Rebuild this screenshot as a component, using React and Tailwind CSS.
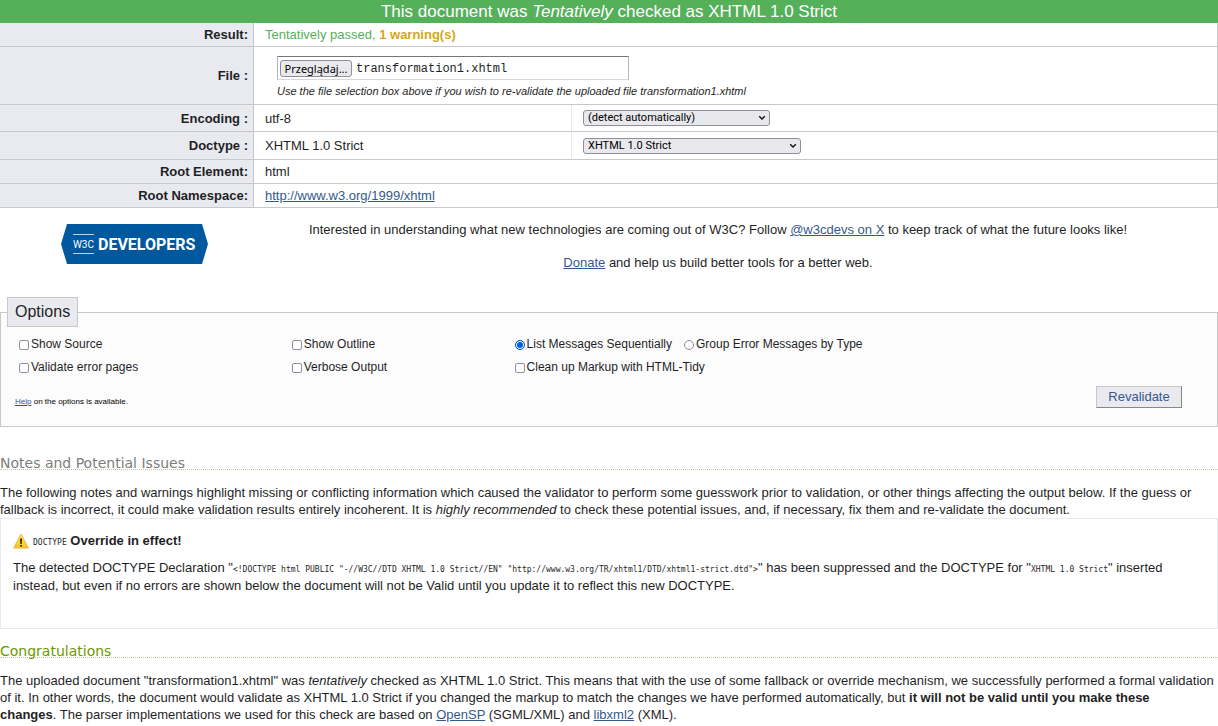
import { useRef, useState } from 'react';

const link = 'text-[#36598d] underline';
const th =
  'border-r border-b border-[#c8c8ca] bg-[#e8eaef] pr-[5px] text-right align-middle font-bold';
const td = 'border-b border-[#c8c8ca] pl-[11px] text-left align-middle';
const box =
  'm-0 size-[10px] shrink-0 appearance-none border border-[#8f8f9d] bg-white checked:border-[#0060df] checked:bg-[#0060df]';

function Check({ id, label }) {
  return (
    <span className="flex items-center gap-[2px]">
      <input id={id} type="checkbox" className={`${box} rounded-xs`} />
      <label htmlFor={id}>{label}</label>
    </span>
  );
}

function Radio({ id, label, defaultChecked }) {
  return (
    <span className="flex items-center gap-[2px]">
      <input
        id={id}
        type="radio"
        name="group"
        defaultChecked={defaultChecked}
        className={`${box} rounded-full checked:shadow-[inset_0_0_0_1px_white]`}
      />
      <label htmlFor={id}>{label}</label>
    </span>
  );
}

function Select({ id, children, className }) {
  return (
    <span className={`relative flex ${className}`}>
      <select
        id={id}
        className="h-4 w-full appearance-none rounded-[3px] border border-[#8f8f9d] bg-[#e9e9ed] pr-5 pl-1 font-[Roboto,sans-serif] text-[11px] leading-[14px] text-black"
      >
        {children}
      </select>
      <svg viewBox="0 0 8 6" className="pointer-events-none absolute top-[5px] right-1 h-[6px] w-2">
        <path d="M1.2 1.2 L4 4 L6.8 1.2" fill="none" stroke="#111" strokeWidth="1.4" />
      </svg>
    </span>
  );
}

function FileField() {
  const input = useRef(null);
  const [name, setName] = useState('transformation1.xhtml');
  return (
    <div className="flex h-6 w-[352px] items-center gap-1 border border-t-[#767676] border-r-[#b5b5b5] border-b-[#d8d8d8] border-l-[#b5b5b5] bg-white px-[2px]">
      <input
        ref={input}
        id="file"
        type="file"
        tabIndex={-1}
        className="hidden"
        onChange={(e) => e.target.files[0] && setName(e.target.files[0].name)}
      />
      <button
        type="button"
        onClick={() => input.current.click()}
        className="h-[17px] w-[72px] shrink-0 rounded-[3px] border border-[#8f8f9d] bg-[#e9e9ed] text-center font-['Noto_Sans',sans-serif] text-[11px] leading-[15px] text-black"
      >
        Przeglądaj...
      </button>
      <span className="pt-px font-['Liberation_Mono',monospace] text-[12px] leading-4 text-[#1f1f26]">{name}</span>
    </div>
  );
}

function DevelopersLogo() {
  return (
    <a href="https://www.w3.org/developers/" aria-label="W3C Developers" className="block">
      <svg viewBox="0 0 147 40" className="block h-10 w-[147px]">
        <path d="M6 0 H141 L147 20 L141 40 H6 L0 20 Z" fill="#00599f" />
        <path d="M12 10.5 H33 M12 29.5 H33" stroke="#b9d3e8" strokeWidth="1" />
        <text x="12" y="24" fill="#fff" fontSize="10" fontFamily="Roboto, sans-serif">
          W3C
        </text>
        <text x="37" y="26" fill="#fff" fontSize="16" fontWeight="bold" fontFamily="Roboto, sans-serif">
          DEVELOPERS
        </text>
      </svg>
    </a>
  );
}

function WarningIcon() {
  return (
    <svg viewBox="0 0 16 16" className="size-4 shrink-0" aria-hidden="true">
      <defs>
        <linearGradient id="warn" x1="0" y1="0" x2="0" y2="1">
          <stop offset="0" stopColor="#ffe86a" />
          <stop offset="1" stopColor="#f8c512" />
        </linearGradient>
      </defs>
      <path
        d="M8 1 L15.3 15 H0.7 Z"
        fill="url(#warn)"
        stroke="#eebc3a"
        strokeWidth="1"
        strokeLinejoin="round"
      />
      <path d="M7 5.5 H9 L8.7 11 H7.3 Z" fill="#2a2a10" />
      <rect x="7.1" y="12" width="1.8" height="1.6" fill="#2a2a10" />
    </svg>
  );
}

function Heading({ className, children }) {
  return (
    <h3
      className={`h-[15px] border-b border-dotted border-[#c3c3a2] font-['DejaVu_Sans',sans-serif] text-[14px] leading-4 ${className}`}
    >
      {children}
    </h3>
  );
}

function Code({ children, className = '' }) {
  return <code className={`font-['DejaVu_Sans_Mono',monospace] text-[8px] leading-none ${className}`}>{children}</code>;
}

export default function App() {
  return (
    <div className="bg-white font-['Liberation_Sans',Arial,sans-serif] text-[13px] leading-[17px] text-[#1f1f26]">
      <form onSubmit={(e) => e.preventDefault()}>
        <h2 className="h-[23px] bg-[#55b05a] text-center text-[17px] leading-[23px] text-white">
          This document was <em>Tentatively</em> checked as XHTML 1.0 Strict
        </h2>
        <table className="w-full table-fixed border-separate border-spacing-0 border-r border-[#c8c8ca]">
          <colgroup>
            <col className="w-[254px]" />
            <col className="w-[317px]" />
            <col />
          </colgroup>
          <tbody>
            <tr className="h-6">
              <th scope="row" className={th}>Result:</th>
              <td colSpan={2} className={`${td} text-[#55b05a]`}>
                Tentatively passed, <strong className="text-[#d6a81b]">1 warning(s)</strong>
              </td>
            </tr>
            <tr className="h-[58px]">
              <th scope="row" className={th}>
                <label htmlFor="file">File :</label>
              </th>
              <td colSpan={2} className={`${td} align-top`}>
                <div className="flex flex-col gap-[3px] pt-[9px] pl-3">
                  <FileField />
                  <em className="text-[11px] leading-4">
                    Use the file selection box above if you wish to re-validate the uploaded file transformation1.xhtml
                  </em>
                </div>
              </td>
            </tr>
            <tr className="h-[27px]">
              <th scope="row" className={th}>
                <label htmlFor="charset">Encoding :</label>
              </th>
              <td className={td}>utf-8</td>
              <td className={`${td} border-l border-l-[#e8eaef]`}>
                <Select id="charset" className="w-[187px]">
                  <option>(detect automatically)</option>
                  <option>utf-8 (Unicode, worldwide)</option>
                </Select>
              </td>
            </tr>
            <tr className="h-7">
              <th scope="row" className={th}>
                <label htmlFor="doctype">Doctype :</label>
              </th>
              <td className={td}>XHTML 1.0 Strict</td>
              <td className={`${td} border-l border-l-[#e8eaef]`}>
                <Select id="doctype" className="w-[218px]">
                  <option>XHTML 1.0 Strict</option>
                  <option>XHTML 1.0 Transitional</option>
                </Select>
              </td>
            </tr>
            <tr className="h-6">
              <th scope="row" className={th}>Root Element:</th>
              <td colSpan={2} className={td}>html</td>
            </tr>
            <tr className="h-6">
              <th scope="row" className={th}>Root Namespace:</th>
              <td colSpan={2} className={td}>
                <a href="http://www.w3.org/1999/xhtml" className={link}>http://www.w3.org/1999/xhtml</a>
              </td>
            </tr>
          </tbody>
        </table>

        <div className="flex items-start pl-[61px]">
          <div className="pt-4">
            <DevelopersLogo />
          </div>
          <div className="flex flex-1 flex-col gap-4 pt-[13px] pl-[10px] text-center">
            <p>
              Interested in understanding what new technologies are coming out of W3C? Follow{' '}
              <a href="https://x.com/w3cdevs" className={link}>@w3cdevs on X</a> to keep track of what the future looks
              like!
            </p>
            <p>
              <a href="https://www.w3.org/donate/" className={link}>Donate</a> and help us build better tools for a
              better web.
            </p>
          </div>
        </div>

        <fieldset className="mt-[26px] border border-[#c8c8ca] bg-[#fcfcfc] pr-[35px] pb-4 pl-[14px] text-[12px]">
          <legend className="-ml-2 h-[30px] border border-[#c8c8ca] bg-[#e8eaef] px-[7px] text-[16px] leading-7">
            Options
          </legend>
          <div className="grid grid-cols-[273fr_223fr_668fr] gap-y-[6px] pt-[9px] pl-1">
            <Check id="ss" label="Show Source" />
            <Check id="outline" label="Show Outline" />
            <div className="flex gap-3">
              <Radio id="group-no" label="List Messages Sequentially" defaultChecked />
              <Radio id="group-yes" label="Group Error Messages by Type" />
            </div>
            <Check id="No200" label="Validate error pages" />
            <Check id="verbose" label="Verbose Output" />
            <Check id="st" label="Clean up Markup with HTML-Tidy" />
          </div>
          <div className="flex items-start justify-between pt-[10px]">
            <p className="pt-2 text-[8px] leading-4 text-black">
              <a href="#help" className="text-[#1d5fa5] underline">Help</a> on the options is available.
            </p>
            <button
              type="submit"
              className="h-[22px] w-[86px] border border-t-[#c8c8ca] border-r-[#888] border-b-[#888] border-l-[#c8c8ca] bg-[#e8eaef] text-[13px] leading-5 text-[#36598d]"
            >
              Revalidate
            </button>
          </div>
        </fieldset>
      </form>

      <section className="pt-7">
        <Heading className="text-[#7d7d7d]">Notes and Potential Issues</Heading>
        <p className="pt-[14px]">
          The following notes and warnings highlight missing or conflicting information which caused the validator to
          perform some guesswork prior to validation, or other things affecting the output below. If the guess or
          fallback is incorrect, it could make validation results entirely incoherent. It is <em>highly recommended</em>{' '}
          to check these potential issues, and, if necessary, fix them and re-validate the document.
        </p>
        <div className="h-[111px] border border-[#e8eaef] px-3 pt-[13px]">
          <h4 className="flex items-center gap-1 font-bold">
            <WarningIcon />
            <span>
              <Code className="font-normal">DOCTYPE</Code> Override in effect!
            </span>
          </h4>
          <p className="pt-[10px] leading-[18px]">
            The detected DOCTYPE Declaration "
            <Code>{'<!DOCTYPE html PUBLIC "-//W3C//DTD XHTML 1.0 Strict//EN" "http://www.w3.org/TR/xhtml1/DTD/xhtml1-strict.dtd">'}</Code>
            " has been suppressed and the DOCTYPE for "<Code>XHTML 1.0 Strict</Code>" inserted
            <br />
            instead, but even if no errors are shown below the document will not be Valid until you update it to reflect
            this new DOCTYPE.
          </p>
        </div>
      </section>

      <section className="pt-[14px]">
        <Heading className="text-[#6c9a00]">Congratulations</Heading>
        <p className="pt-[14px]">
          The uploaded document "transformation1.xhtml" was <em>tentatively</em> checked as XHTML 1.0 Strict. This means
          that with the use of some fallback or override mechanism, we successfully performed a formal validation of it.
          In other words, the document would validate as XHTML 1.0 Strict if you changed the markup to match the changes
          we have performed automatically, but{' '}
          <strong>
            it will not be valid until you make these
            <br />
            changes
          </strong>
          . The parser implementations we used for this check are based on{' '}
          <a href="http://openjade.sourceforge.net/" className={link}>OpenSP</a> (SGML/XML) and{' '}
          <a href="http://www.xmlsoft.org/" className={link}>libxml2</a> (XML).
        </p>
      </section>
    </div>
  );
}
